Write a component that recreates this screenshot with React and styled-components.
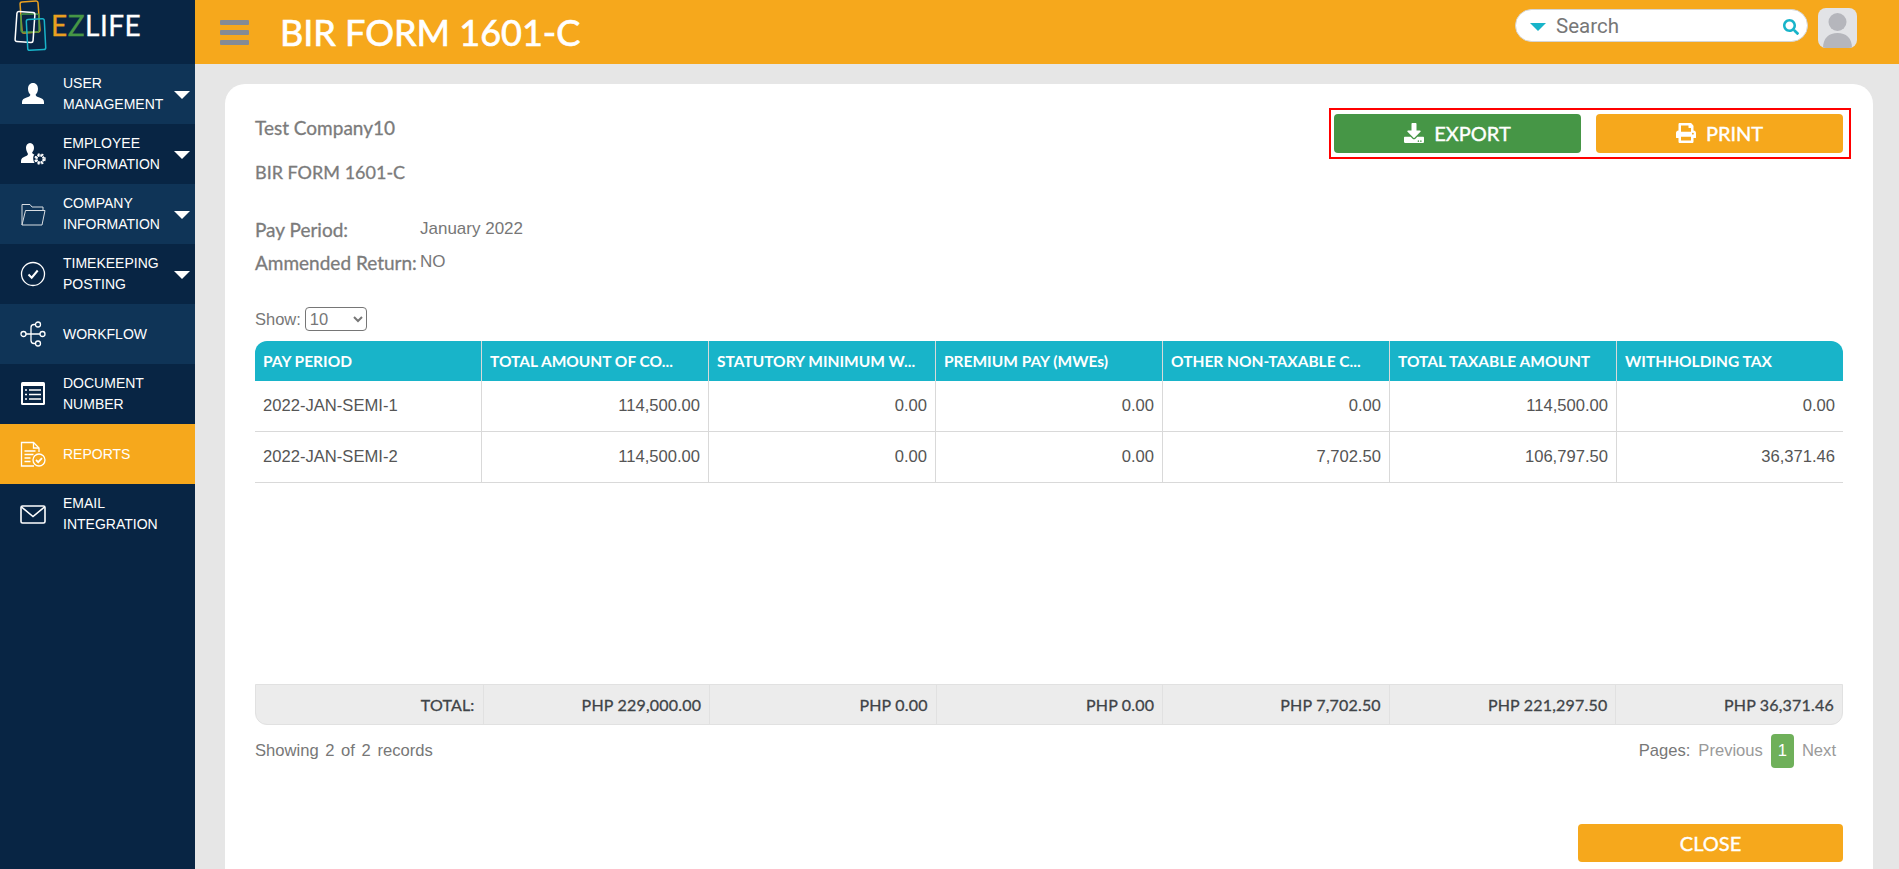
import React from "react";
import styled, { createGlobalStyle } from "styled-components";
import { FaDownload, FaPrint, FaSearch } from "react-icons/fa";

const GlobalStyle = createGlobalStyle`
	html, body {
		margin: 0;
		height: 100%;
		overflow: hidden;
		font-family: "Liberation Sans", Arial, sans-serif;
	}
	* {
		box-sizing: border-box;
	}
`;

const heading = `"Lato", "Liberation Sans", sans-serif`;

const Page = styled.div`
	display: flex;
	height: 869px;
	overflow: hidden;
`;
const Sidebar = styled.aside`
	width: 195px;
	flex-shrink: 0;
	background-color: #082544;
	display: flex;
	flex-direction: column;
`;
const LogoRow = styled.div`
	height: 64px;
	display: flex;
	align-items: flex-start;
	gap: 3px;
`;
const LogoText = styled.div`
	font-family: ${heading};
	font-size: 28px;
	line-height: 28px;
	font-weight: 400;
	-webkit-text-stroke: 0.3px;
	color: #fff;
	margin-top: 11px;
	letter-spacing: 0.5px;
`;
const LogoLetter = styled.span`
	color: ${(p) => p.color};
`;
const MenuItem = styled.div`
	height: 60px;
	display: flex;
	align-items: center;
	position: relative;
	padding-left: 20px;
	gap: 17px;
	color: #fff;
	font-size: 14px;
	line-height: 21px;
	background-color: ${(p) => (p.$active ? "#f6a81c" : p.$light ? "#0f3457" : "#082544")};
`;
const MenuIcon = styled.svg`
	width: 26px;
	height: 26px;
	flex-shrink: 0;
	fill: none;
	stroke: #fff;
	stroke-width: 1.3;
`;
const Caret = styled.span`
	position: absolute;
	right: 5px;
	top: 27px;
	border-left: 8px solid transparent;
	border-right: 8px solid transparent;
	border-top: 8px solid #fff;
`;
const Main = styled.div`
	flex: 1;
	min-width: 0;
	display: flex;
	flex-direction: column;
	background-color: #e6e6e6;
`;
const Header = styled.header`
	height: 64px;
	flex-shrink: 0;
	background-color: #f6a81c;
	display: flex;
	align-items: center;
	padding: 0 42px 0 25px;
`;
const Burger = styled.div`
	width: 29px;
	display: flex;
	flex-direction: column;
	gap: 5px;
	margin-right: 31px;
`;
const BurgerBar = styled.span`
	display: block;
	height: 5px;
	border-radius: 1px;
	background-color: #848b96;
`;
const Title = styled.h1`
	margin: 0;
	font-family: ${heading};
	font-size: 36px;
	line-height: 64px;
	font-weight: 400;
	-webkit-text-stroke: 0.7px;
	color: #fff;
	flex: 1;
`;
const SearchBox = styled.div`
	width: 293px;
	height: 33px;
	margin: -13px 10px 0 0;
	border-radius: 17px;
	border: 1px solid #d5d5d5;
	background-color: #fff;
	display: flex;
	align-items: center;
	padding: 0 8px 0 14px;
	color: #777;
	font-family: "Roboto", sans-serif;
	font-size: 20.5px;
`;
const SearchCaret = styled.span`
	border-left: 8px solid transparent;
	border-right: 8px solid transparent;
	border-top: 8px solid #18b4c9;
	margin: 3px 10px 0 0;
`;
const SearchLabel = styled.span`
	flex: 1;
`;
const SearchIcon = styled(FaSearch)`
	color: #18b4c9;
	font-size: 16px;
	margin-top: 3px;
`;
const Avatar = styled.svg`
	width: 39px;
	height: 40px;
	margin-top: -8px;
	border-radius: 8px;
	background-color: #e2e3e6;
`;
const Card = styled.section`
	margin: 20px 26px 0 30px;
	flex: 1;
	background-color: #fff;
	border-radius: 20px 20px 0 0;
	padding: 33px 30px 0;
	display: flex;
	flex-direction: column;
	color: #777;
`;
const TopRow = styled.div`
	display: flex;
	justify-content: space-between;
	height: 63px;
`;
const CompanyBlock = styled.div`
	display: flex;
	flex-direction: column;
	gap: 22px;
`;
const HeadingText = styled.div`
	font-family: ${heading};
	font-size: ${(p) => p.$size || 19}px;
	line-height: 22px;
	font-weight: 400;
	-webkit-text-stroke: 0.3px;
	color: #7b7b7b;
`;
const ActionBox = styled.div`
	width: 522px;
	height: 51px;
	margin: -9px -8px 0 0;
	border: 2px solid #f00;
	display: flex;
	align-items: center;
	gap: 15px;
	padding: 0 6px 1px 3px;
`;
const ActionBtn = styled.button`
	flex: 1;
	height: 39px;
	border: 0;
	border-radius: 4px;
	background-color: ${(p) => (p.$green ? "#469646" : "#f6a81c")};
	color: #fff;
	font-family: ${heading};
	font-size: 20px;
	font-weight: 400;
	-webkit-text-stroke: 0.4px;
	display: flex;
	align-items: center;
	justify-content: center;
	gap: 10px;
`;
const MetaRow = styled.div`
	display: flex;
	align-items: center;
	height: 33px;
	margin-top: ${(p) => p.$top || 0}px;
`;
const MetaLabel = styled(HeadingText)`
	width: 165px;
`;
const MetaValue = styled.span`
	font-size: 17px;
	margin-top: -2px;
	color: #777;
`;
const ShowRow = styled.div`
	display: flex;
	align-items: center;
	gap: 4px;
	font-size: 16.5px;
	height: 24px;
	margin: 28px 0 10px;
`;
const PageSelect = styled.select`
	width: 62px;
	height: 24px;
	border: 1px solid #767676;
	border-radius: 4px;
	background-color: #fff;
	color: #777;
	font-family: "Liberation Sans", sans-serif;
	font-size: 16.5px;
`;
const TableArea = styled.div`
	height: 343px;
`;
const Table = styled.table`
	width: 100%;
	table-layout: fixed;
	border-collapse: separate;
	border-spacing: 0;
`;
const HeadCell = styled.th`
	height: 40px;
	padding: 0 8px;
	background-color: #18b4c9;
	color: #fff;
	font-family: ${heading};
	font-size: 15.5px;
	font-weight: 700;
	text-align: left;
	white-space: nowrap;
	overflow: hidden;
	border-left: 1px solid #d9d9d9;
	&:first-child {
		width: 226px;
		border-left: 0;
		border-top-left-radius: 12px;
	}
	&:last-child {
		border-top-right-radius: 12px;
	}
`;
const Cell = styled.td`
	height: 51px;
	padding: 0 8px;
	font-size: 16.6px;
	color: #555;
	text-align: ${(p) => (p.$left ? "left" : "right")};
	border-left: 1px solid #d9d9d9;
	border-bottom: 1px solid #d9d9d9;
	&:first-child {
		border-left: 0;
	}
`;
const FooterRow = styled.div`
	display: grid;
	grid-template-columns: repeat(7, 1fr);
	height: 41px;
	background-color: #ececec;
	border: 1px solid #e1e1e1;
	border-radius: 0 0 12px 12px;
`;
const FooterCell = styled.div`
	display: flex;
	align-items: center;
	justify-content: flex-end;
	padding-right: 8px;
	font-family: ${heading};
	font-size: 16px;
	font-weight: 400;
	-webkit-text-stroke: 0.3px;
	letter-spacing: 0.2px;
	color: #3f4448;
	border-left: 1px solid #e1e1e1;
	&:first-child {
		border-left: 0;
	}
`;
const Pager = styled.div`
	display: flex;
	justify-content: space-between;
	align-items: center;
	height: 34px;
	margin-top: 9px;
	font-size: 16.6px;
`;
const RecordCount = styled.span`
	word-spacing: 2px;
`;
const PagerLinks = styled.div`
	display: flex;
	align-items: center;
	gap: 8px;
	padding-right: 7px;
`;
const PagerLink = styled.span`
	color: #9a9a9a;
`;
const PageNumber = styled.span`
	width: 23px;
	height: 34px;
	border-radius: 4px;
	background-color: #6fb05a;
	color: #fff;
	display: flex;
	align-items: center;
	justify-content: center;
`;
const CloseRow = styled.div`
	display: flex;
	justify-content: flex-end;
	margin-top: 56px;
`;
const CloseBtn = styled.button`
	width: 265px;
	height: 38px;
	border: 0;
	border-radius: 4px;
	background-color: #f6a81c;
	color: #fff;
	font-family: ${heading};
	font-size: 20px;
	font-weight: 400;
	-webkit-text-stroke: 0.4px;
`;

const icons = {
	user: (
		<path
			d="M13 2c3.200 0 5 2.600 5 5.800 0 2.600-1 4.600-2.400 6 .3 1.400 1.600 2 3.800 2.800 2.400.9 4.600 1.800 4.600 4.400v2H2v-2c0-2.600 2.200-3.500 4.600-4.400 2.200-.8 3.500-1.400 3.800-2.800C9 12.400 8 10.400 8 7.800 8 4.600 9.800 2 13 2z"
			fill="#fff"
			stroke="none"
		/>
	),
	employee: (
		<>
			<path
				d="M10 2c2.600 0 4 2.200 4 4.700 0 2-.8 3.600-1.900 4.800.2 1 1.100 1.600 2.300 2.100-1.400 1.400-1.800 5.400.2 8.400H1v-2c0-2.600 2-3.700 4-4.500 1.800-.7 2.800-1.300 3-2.500C6.800 10.300 6 8.700 6 6.700 6 4.200 7.400 2 10 2z"
				fill="#fff"
				stroke="none"
			/>
			<circle cx="20" cy="18" r="3.600" strokeWidth="2.200" strokeDasharray="2.200 .6" />
			<circle cx="20" cy="18" r="5" strokeWidth="1.400" strokeDasharray="2 2.100" />
		</>
	),
	folder: (
		<g strokeWidth="1" stroke="#d8dde2">
			<path d="M2 24V3.500h8l2 2.500h11v3" />
			<path d="M2 24h20l3-14.500H5.500L2 24z" />
		</g>
	),
	check: (
		<>
			<circle cx="13" cy="13" r="11.500" />
			<path d="M8.500 13.500l3.200 3.200 6-7.200" strokeWidth="2" />
		</>
	),
	workflow: (
		<>
			<circle cx="3.500" cy="13" r="2.500" />
			<circle cx="18" cy="3.500" r="2.500" />
			<circle cx="22.500" cy="13" r="2.500" />
			<circle cx="18" cy="22.500" r="2.500" />
			<path d="M6 13h14M15.500 3.500h-1.500a3 3 0 0 0-3 3v13a3 3 0 0 0 3 3h1.500" />
		</>
	),
	document: (
		<>
			<rect x="1" y="1" width="24" height="23" rx="1.500" fill="#fff" stroke="none" />
			<rect x="3" y="5" width="20" height="17" fill="#082544" stroke="none" />
			<path d="M5 9h2M9 9h12M5 13.500h2M9 13.500h12M5 18h2M9 18h12" stroke="#fff" strokeWidth="1.600" />
		</>
	),
	report: (
		<>
			<path d="M14 25H1.500V1.500h12L19 7v4" />
			<path d="M13.500 1.500V7H19" />
			<path d="M4.500 10h11M4.500 13.500h9M4.500 17h6M4.500 20.500h6" />
			<circle cx="19" cy="19" r="6" />
			<path d="M16 19l2.200 2.200 3.800-4" strokeWidth="1.800" />
		</>
	),
	mail: (
		<>
			<rect x="1" y="5" width="24" height="17" rx="1.500" strokeWidth="1.600" />
			<path d="M1.500 6L13 15.500 24.500 6" strokeWidth="1.600" />
		</>
	),
};

const menu = [
	{ icon: "user", lines: ["USER", "MANAGEMENT"], caret: true },
	{ icon: "employee", lines: ["EMPLOYEE", "INFORMATION"], caret: true },
	{ icon: "folder", lines: ["COMPANY", "INFORMATION"], caret: true },
	{ icon: "check", lines: ["TIMEKEEPING", "POSTING"], caret: true },
	{ icon: "workflow", lines: ["WORKFLOW"] },
	{ icon: "document", lines: ["DOCUMENT", "NUMBER"] },
	{ icon: "report", lines: ["REPORTS"], active: true },
	{ icon: "mail", lines: ["EMAIL", "INTEGRATION"] },
];

const columns = [
	"PAY PERIOD",
	"TOTAL AMOUNT OF CO...",
	"STATUTORY MINIMUM W...",
	"PREMIUM PAY (MWEs)",
	"OTHER NON-TAXABLE C...",
	"TOTAL TAXABLE AMOUNT",
	"WITHHOLDING TAX",
];

const rows = [
	["2022-JAN-SEMI-1", "114,500.00", "0.00", "0.00", "0.00", "114,500.00", "0.00"],
	["2022-JAN-SEMI-2", "114,500.00", "0.00", "0.00", "7,702.50", "106,797.50", "36,371.46"],
];

const totals = [
	"TOTAL:",
	"PHP 229,000.00",
	"PHP 0.00",
	"PHP 0.00",
	"PHP 7,702.50",
	"PHP 221,297.50",
	"PHP 36,371.46",
];

function Logo() {
	return (
		<svg width="48" height="52" viewBox="0 0 48 52" fill="none" strokeWidth="1.500">
			<rect x="21" y="1.500" width="18" height="31" rx="2" stroke="#e9a020" transform="rotate(-4 30 17)" />
			<rect x="21" y="14" width="18" height="18" rx="2" stroke="#469646" />
			<rect x="16" y="12" width="18" height="30" rx="2" stroke="#fff" transform="rotate(4 25 27)" />
			<rect x="27" y="19" width="18" height="31" rx="2" stroke="#18b4c9" transform="rotate(-3 36 34)" />
		</svg>
	);
}

export default function App() {
	return (
		<Page>
			<GlobalStyle />
			<Sidebar>
				<LogoRow>
					<Logo />
					<LogoText>
						<LogoLetter color="#e9a020">E</LogoLetter>
						<LogoLetter color="#469646">Z</LogoLetter>
						LIFE
					</LogoText>
				</LogoRow>
				{menu.map((item, i) => (
					<MenuItem key={item.icon} $light={i % 2 === 0} $active={item.active}>
						<MenuIcon viewBox="0 0 26 26">{icons[item.icon]}</MenuIcon>
						<div>
							{item.lines.map((line) => (
								<div key={line}>{line}</div>
							))}
						</div>
						{item.caret && <Caret />}
					</MenuItem>
				))}
			</Sidebar>
			<Main>
				<Header>
					<Burger>
						<BurgerBar />
						<BurgerBar />
						<BurgerBar />
					</Burger>
					<Title>BIR FORM 1601-C</Title>
					<SearchBox>
						<SearchCaret />
						<SearchLabel>Search</SearchLabel>
						<SearchIcon />
					</SearchBox>
					<Avatar viewBox="0 0 39 40">
						<circle cx="19.500" cy="14" r="9" fill="#b5b6bc" />
						<path d="M5 40c0-10 6-15 14.500-15S34 30 34 40z" fill="#b5b6bc" />
					</Avatar>
				</Header>
				<Card>
					<TopRow>
						<CompanyBlock>
							<HeadingText>Test Company10</HeadingText>
							<HeadingText $size={18}>BIR FORM 1601-C</HeadingText>
						</CompanyBlock>
						<ActionBox>
							<ActionBtn $green>
								<FaDownload />
								EXPORT
							</ActionBtn>
							<ActionBtn>
								<FaPrint />
								PRINT
							</ActionBtn>
						</ActionBox>
					</TopRow>
					<MetaRow $top={33}>
						<MetaLabel>Pay Period:</MetaLabel>
						<MetaValue>January 2022</MetaValue>
					</MetaRow>
					<MetaRow>
						<MetaLabel>Ammended Return:</MetaLabel>
						<MetaValue>NO</MetaValue>
					</MetaRow>
					<ShowRow>
						Show:
						<PageSelect defaultValue="10">
							<option>10</option>
							<option>25</option>
							<option>50</option>
						</PageSelect>
					</ShowRow>
					<TableArea>
						<Table>
							<thead>
								<tr>
									{columns.map((c) => (
										<HeadCell key={c}>{c}</HeadCell>
									))}
								</tr>
							</thead>
							<tbody>
								{rows.map((row) => (
									<tr key={row[0]}>
										{row.map((v, i) => (
											<Cell key={i} $left={i === 0}>
												{v}
											</Cell>
										))}
									</tr>
								))}
							</tbody>
						</Table>
					</TableArea>
					<FooterRow>
						{totals.map((t, i) => (
							<FooterCell key={i}>{t}</FooterCell>
						))}
					</FooterRow>
					<Pager>
						<RecordCount>Showing 2 of 2 records</RecordCount>
						<PagerLinks>
							<span>Pages:</span>
							<PagerLink>Previous</PagerLink>
							<PageNumber>1</PageNumber>
							<PagerLink>Next</PagerLink>
						</PagerLinks>
					</Pager>
					<CloseRow>
						<CloseBtn>CLOSE</CloseBtn>
					</CloseRow>
				</Card>
			</Main>
		</Page>
	);
}
